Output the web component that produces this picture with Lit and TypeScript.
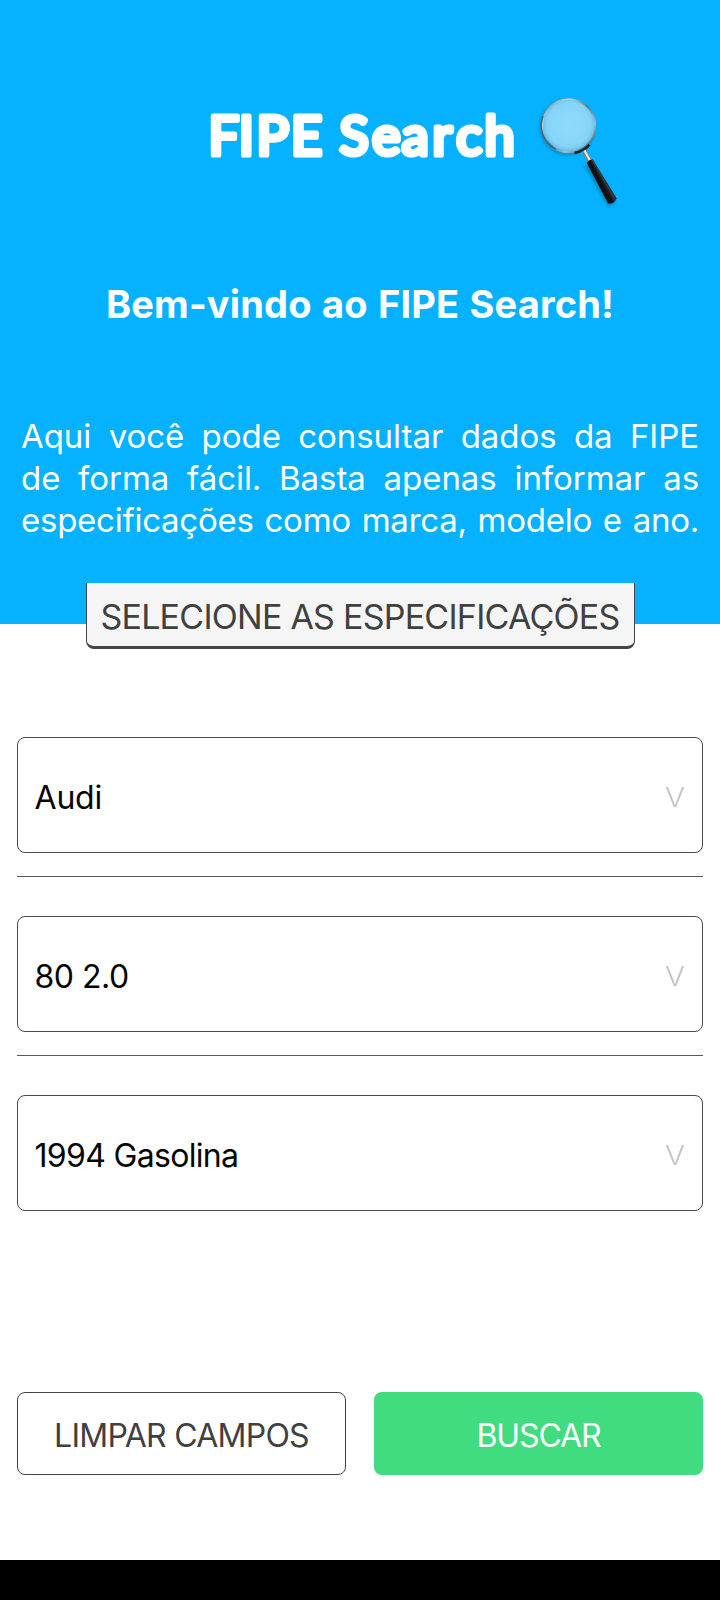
import { LitElement, html, css } from "lit";
import { customElement, property } from "lit/decorators.js";

@customElement("fipe-logo")
export class FipeLogo extends LitElement {
  static styles = css`
    :host { display: block; }
    .logo { display: block; width: 720px; height: 281px; }
    .name {
      font-family: Lato, sans-serif;
      font-size: 54px;
      font-weight: 400;
      fill: #fff;
      stroke: #fff;
      stroke-width: 5.2px;
      stroke-linejoin: round;
    }
  `;

  render() {
    return html`
      <svg class="logo" viewBox="0 0 720 281" role="img" aria-label="FIPE Search">
        <defs>
          <radialGradient id="lens" cx="50%" cy="48%" r="52%">
            <stop offset="0" stop-color="#8fdbfd" />
            <stop offset="0.78" stop-color="#86d5f8" />
            <stop offset="1" stop-color="#62bee9" />
          </radialGradient>
          <linearGradient id="rim" x1="0" y1="0" x2="1" y2="1">
            <stop offset="0" stop-color="#5c7f90" />
            <stop offset="0.25" stop-color="#c3d0d2" />
            <stop offset="0.5" stop-color="#54798b" />
            <stop offset="0.72" stop-color="#a9bcc2" />
            <stop offset="1" stop-color="#172a35" />
          </linearGradient>
          <linearGradient id="grip" x1="0" y1="0" x2="1" y2="0">
            <stop offset="0" stop-color="#050808" />
            <stop offset="0.6" stop-color="#15191b" />
            <stop offset="0.8" stop-color="#3a4043" />
            <stop offset="1" stop-color="#0b0d0e" />
          </linearGradient>
          <filter id="soft" x="-20%" y="-20%" width="140%" height="140%">
            <feGaussianBlur stdDeviation="1.6" />
          </filter>
        </defs>
        <text class="name" y="154.6" x="208.5 238.7 256.5 291 328 339.5 372 401.7 432.5 456.3 484.5">FIPE Search</text>
        <g filter="url(#soft)" opacity="0.3">
          <circle cx="567.5" cy="127.5" r="26.5" fill="none" stroke="#06384f" stroke-width="3" />
          <path d="M588 164 L612 205" stroke="#06384f" stroke-width="9" />
        </g>
        <circle cx="568.8" cy="125.7" r="26.6" fill="url(#lens)" stroke="url(#rim)" stroke-width="1.8" />
        <path d="M543 116 A27 27 0 0 0 556 149.5" fill="none" stroke="#3f6475" stroke-width="1.3" />
        <path d="M574.5 153 A28 28 0 0 0 589.5 144.9" fill="none" stroke="#15242c" stroke-width="2.6" />
        <path d="M584 150.5 L590 161.5" stroke="#73838a" stroke-width="5" />
        <path d="M584.5 150.5 L590.2 161" stroke="#e8eeee" stroke-width="2" />
        <g transform="translate(589.7 161) rotate(-29.5)">
          <path d="M-3.5 0 Q0 -1.6 3.5 0 L4.9 46 Q0 50 -4.9 46 Z" fill="url(#grip)" />
        </g>
      </svg>
    `;
  }
}

@customElement("spec-select")
export class SpecSelect extends LitElement {
  @property() value = "";

  static styles = css`
    :host { display: block; }
    .box {
      box-sizing: border-box;
      height: 116px;
      padding: 5px 18px 0 16.5px;
      display: flex;
      align-items: center;
      justify-content: space-between;
      border: 1px solid #4a4a4a;
      border-radius: 8px;
      background: #fff;
      color: #050505;
      font-size: 32px;
      line-height: 40px;
      white-space: pre;
    }
    .value { letter-spacing: var(--tracking, 0); }
    .arrow { font-size: 27px; font-weight: 300; color: #c4c4c4; transform: scaleX(1.1); }
  `;

  render() {
    return html`<div class="box"><span class="value">${this.value}</span><span class="arrow">V</span></div>`;
  }
}

@customElement("app-root")
export class AppRoot extends LitElement {
  static styles = css`
    :host {
      display: flex;
      flex-direction: column;
      width: 720px;
      height: 1600px;
      background: #fff;
      font-family: Inter, "Liberation Sans", sans-serif;
    }
    .hero {
      flex: none;
      height: 624px;
      background: #06b2ff;
      color: #fff;
    }
    .welcome {
      margin: 0;
      font-size: 38px;
      line-height: 46px;
      font-weight: 700;
      letter-spacing: 0.15px;
      word-spacing: 1.2px;
      text-align: center;
    }
    .intro {
      margin: 88px 21px 0 21px;
      font-size: 33px;
      line-height: 42px;
      letter-spacing: -0.05px;
    }
    .line { display: block; text-align: justify; text-align-last: justify; white-space: nowrap; }
    .tight { letter-spacing: -0.25px; }
    .tag {
      flex: none;
      box-sizing: border-box;
      align-self: center;
      width: 549px;
      height: 66px;
      margin-top: -41px;
      padding-top: 14px;
      border: 1.5px solid #444;
      border-top: 0;
      border-bottom-width: 3px;
      border-radius: 0 0 8px 8px;
      background: #f5f5f5;
      color: #404040;
      font-size: 34px;
      line-height: 40px;
      letter-spacing: -0.75px;
      text-align: center;
      white-space: nowrap;
    }
    .fields { margin: 88px 17px 0; display: flex; flex-direction: column; }
    .rule { height: 1px; margin: 23px 0 39px; background: #5a5a5a; }
    .brand { --tracking: -0.2px; }
    .model { --tracking: -0.5px; }
    .year { --tracking: -0.68px; }
    .actions { margin: 181px 17px 0; display: grid; grid-template-columns: 1fr 1fr; gap: 28px; }
    .btn {
      box-sizing: border-box;
      height: 83px;
      padding: 4px 0 0;
      border: 1.5px solid #444;
      border-radius: 8px;
      background: #fff;
      color: #404040;
      font: 400 32px Inter, "Liberation Sans", sans-serif;
      letter-spacing: -0.75px;
    }
    .primary { border: 0; background: #41dc80; color: #fff; letter-spacing: -1.1px; }
    .navbar { margin-top: auto; height: 40px; background: #000; }
  `;

  render() {
    return html`
      <header class="hero">
        <fipe-logo></fipe-logo>
        <h1 class="welcome">Bem-vindo ao FIPE Search!</h1>
        <p class="intro">
          <span class="line">Aqui você pode consultar dados da FIPE</span>
          <span class="line">de forma fácil. Basta apenas informar as</span>
          <span class="line tight">especificações como marca, modelo e ano.</span>
        </p>
      </header>
      <div class="tag">SELECIONE AS ESPECIFICAÇÕES</div>
      <main class="fields">
        <spec-select class="brand" value="Audi"></spec-select>
        <div class="rule"></div>
        <spec-select class="model" value="80 2.0"></spec-select>
        <div class="rule"></div>
        <spec-select class="year" value="1994 Gasolina"></spec-select>
      </main>
      <div class="actions">
        <button class="btn">LIMPAR CAMPOS</button>
        <button class="btn primary">BUSCAR</button>
      </div>
      <div class="navbar"></div>
    `;
  }
}
